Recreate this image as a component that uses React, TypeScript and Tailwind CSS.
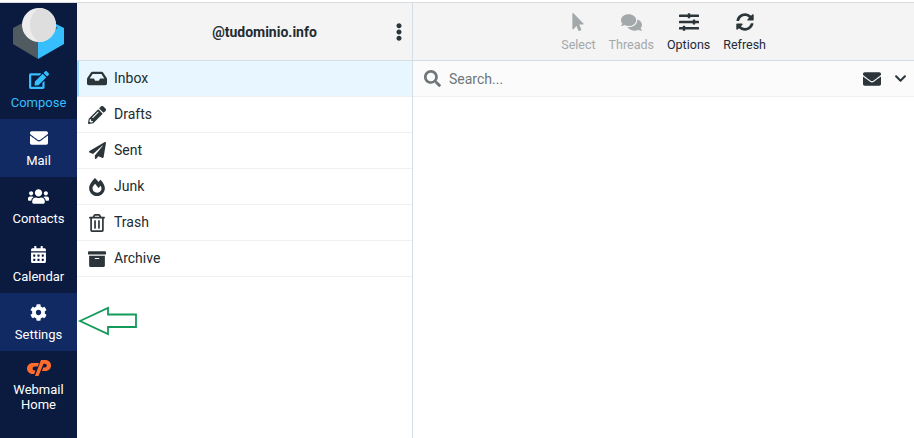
import type { ReactNode } from 'react'
import {
  FaArchive,
  FaCalendarAlt,
  FaChevronDown,
  FaCog,
  FaComments,
  FaEdit,
  FaEllipsisV,
  FaEnvelope,
  FaFireAlt,
  FaInbox,
  FaMousePointer,
  FaPaperPlane,
  FaPencilAlt,
  FaRegTrashAlt,
  FaSearch,
  FaSlidersH,
  FaSyncAlt,
  FaUsers,
} from 'react-icons/fa'

const folders = [
  { name: 'Inbox', icon: <FaInbox size={21} />, active: true },
  { name: 'Drafts', icon: <FaPencilAlt size={18} /> },
  { name: 'Sent', icon: <FaPaperPlane size={17} /> },
  { name: 'Junk', icon: <FaFireAlt size={18} /> },
  { name: 'Trash', icon: <FaRegTrashAlt size={18} /> },
  { name: 'Archive', icon: <FaArchive size={18} /> },
]

function Logo() {
  return (
    <svg width="77" height="58" viewBox="0 0 77 58">
      <path d="M13 25 L38 12 L38 56 L13 41 Z" fill="#4f5b60" />
      <path d="M38 12 L64 25 L64 41 L38 56 Z" fill="#37beff" />
      <path d="M20 25 L38 36 L58 25 L38 12 Z" fill="#4f5b60" />
      <circle cx="39" cy="22" r="17" fill="#ececec" />
      <path d="M39 5 A17 17 0 0 1 39 39 A20.5 20.5 0 0 1 39 5 Z" fill="#dedede" />
    </svg>
  )
}

function CpanelLogo() {
  return (
    <svg width="24" height="16" viewBox="0 0 24 16" fill="#ff6c2c">
      <path d="M6 3 H12 L10.8 6.5 H7.5 C5 6.5 5 10.5 7.5 10.5 H8.5 L7.2 14 H6 C-2 14 -2 3 6 3 Z" />
      <path d="M14 0 H18 C26 0 26 11 18 11 H15 L16.2 7.5 H17.8 C20.5 7.5 20.5 3.7 17.8 3.7 H16.5 L11.5 16 H8 Z" />
    </svg>
  )
}

function NavItem({ icon, label, active, color }: { icon: ReactNode; label: string; active?: boolean; color?: string }) {
  return (
    <div
      className={`flex h-[58px] flex-col items-center pt-[9px] ${active ? 'bg-[#112a63]' : ''} ${color ?? 'text-white'}`}
    >
      <div className="flex h-[20px] items-center">{icon}</div>
      <div className="mt-[3px] text-[13px] leading-[20px]">{label}</div>
    </div>
  )
}

function ToolButton({ icon, label, disabled }: { icon: ReactNode; label: string; disabled?: boolean }) {
  return (
    <div className={`flex flex-col items-center ${disabled ? 'text-[#a3a8aa]' : 'text-[#2c363a]'}`}>
      <div className="flex h-[20px] items-center">{icon}</div>
      <div className={`mt-[5px] text-[12.5px] leading-[16px] ${disabled ? 'text-[#a3a8aa]' : 'text-[#1d2b3a]'}`}>{label}</div>
    </div>
  )
}

export default function App() {
  return (
    <div className="relative flex h-[438px] w-[914px] flex-col overflow-hidden bg-white font-['Roboto',sans-serif]">
      <div className="h-[3px] shrink-0 border-b border-[#d8dadb] bg-white" />
      <div className="flex min-h-0 flex-1">
        {/* Sidebar */}
        <div className="flex w-[77px] shrink-0 flex-col bg-[#0a1b3f]">
          <Logo />
          <NavItem icon={<FaEdit size={20} />} label="Compose" color="text-[#37beff]" />
          <NavItem icon={<FaEnvelope size={18} />} label="Mail" active />
          <NavItem icon={<FaUsers size={21} />} label="Contacts" />
          <NavItem icon={<FaCalendarAlt size={17} />} label="Calendar" />
          <NavItem icon={<FaCog size={17} />} label="Settings" active />
          <div className="flex flex-col items-center pt-[9px] text-white">
            <CpanelLogo />
            <div className="mt-[6px] text-center text-[13px] leading-[15px]">
              Webmail
              <br />
              Home
            </div>
          </div>
        </div>

        {/* Folder list */}
        <div className="flex w-[336px] shrink-0 flex-col border-r border-[#d4dee3]">
          <div className="relative flex h-[58px] shrink-0 items-center justify-center border-b border-[#d4dee3] bg-[#f4f4f4] pt-[2px] pl-[40px]">
            <span className="text-[14px] font-bold text-[#222b30]">@tudominio.info</span>
            <FaEllipsisV size={18} className="absolute top-[20px] right-[4px] text-[#2c363a]" />
          </div>
          {folders.map((f) => (
            <div
              key={f.name}
              className={`flex h-[36px] shrink-0 items-center border-b border-[#f0f0f0] text-[14px] text-[#222b30] ${
                f.active ? 'border-l-2 border-l-[#9fdcfb] bg-[#e8f7ff] pl-[8px]' : 'pl-[10px]'
              }`}
            >
              <span className="flex w-[20px] justify-center text-[#2c363a]">{f.icon}</span>
              <span className="ml-[7px]">{f.name}</span>
            </div>
          ))}
        </div>

        {/* Message list */}
        <div className="flex min-w-0 flex-1 flex-col">
          <div className="flex h-[58px] shrink-0 items-center justify-end gap-[13px] border-b border-[#d4dee3] bg-[#f4f4f4] pt-[2px] pr-[148px]">
            <ToolButton icon={<FaMousePointer size={18} />} label="Select" disabled />
            <ToolButton icon={<FaComments size={21} />} label="Threads" disabled />
            <ToolButton icon={<FaSlidersH size={20} />} label="Options" />
            <ToolButton icon={<FaSyncAlt size={18} />} label="Refresh" />
          </div>
          <div className="flex h-[36px] shrink-0 items-center border-b border-[#f0f0f0] bg-[#fbfbfb] pr-[7px] pl-[11px]">
            <FaSearch size={17} className="text-[#6f7679]" />
            <span className="ml-[8px] flex-1 text-[14px] leading-[20px] text-[#6f7679]">Search...</span>
            <FaEnvelope size={18} className="text-[#2c363a]" />
            <FaChevronDown size={13} className="ml-[13px] text-[#2c363a]" />
          </div>
        </div>
      </div>

      {/* Annotation arrow */}
      <svg className="absolute top-0 left-0" width="914" height="438" fill="none">
        <path d="M80 321 L108 308 V314.5 H136 V327 H108 V334 Z" stroke="#129a5a" strokeWidth="1.8" />
      </svg>
    </div>
  )
}
